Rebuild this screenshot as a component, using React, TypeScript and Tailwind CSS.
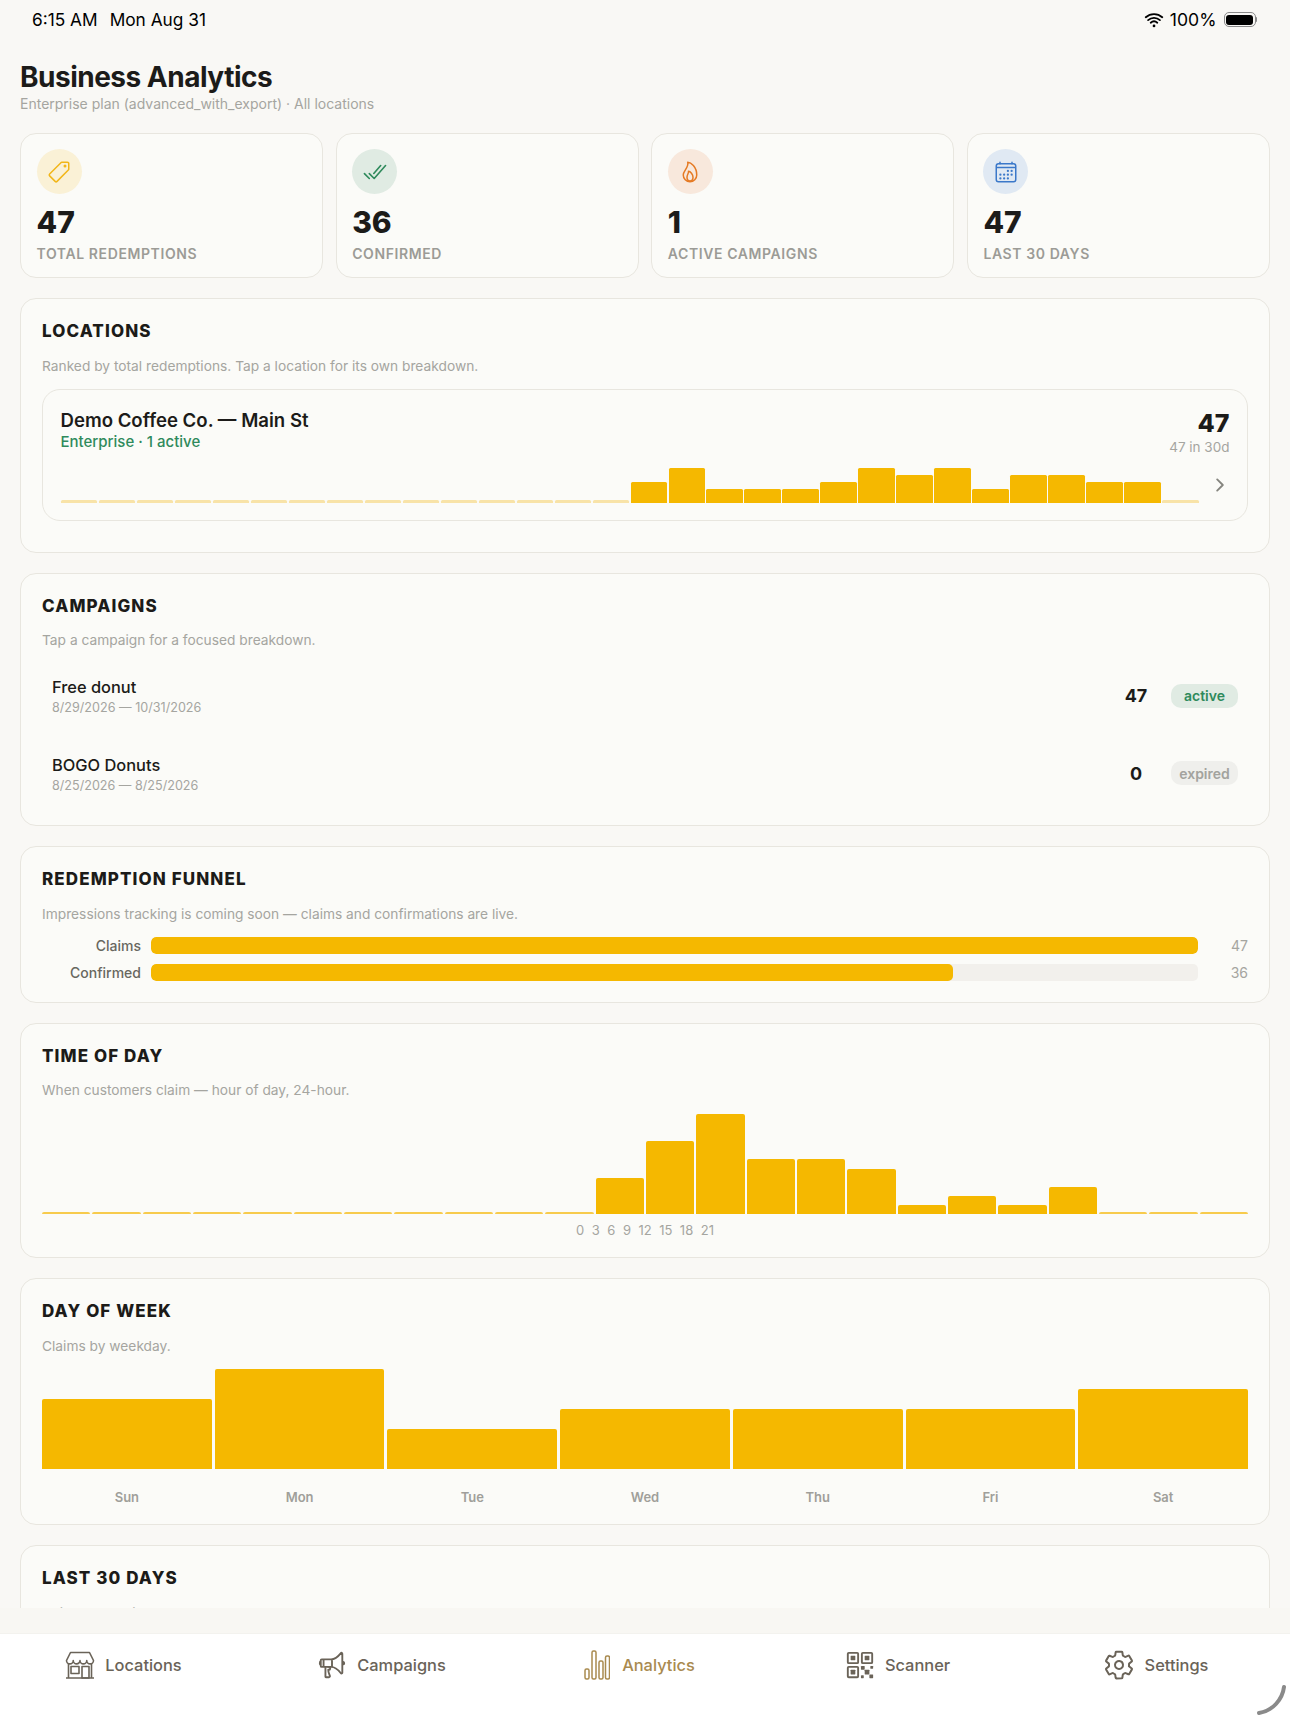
import React from 'react';
import {
  IoCalendarOutline,
  IoCheckmarkDoneOutline,
  IoChevronForward,
  IoFlameOutline,
  IoMegaphoneOutline,
  IoPricetagOutline,
  IoQrCodeOutline,
  IoSettingsOutline,
  IoWifi,
} from 'react-icons/io5';

const sparkline = [0, 0, 0, 0, 0, 0, 0, 0, 0, 0, 0, 0, 0, 0, 0, 3, 5, 2, 2, 2, 3, 5, 4, 5, 2, 4, 4, 3, 3, 0];
const hours = [0, 0, 0, 0, 0, 0, 0, 0, 0, 0, 0, 4, 8, 11, 6, 6, 5, 1, 2, 1, 3, 0, 0, 0];
const weekdays = [
  { day: 'Sun', value: 7 },
  { day: 'Mon', value: 10 },
  { day: 'Tue', value: 4 },
  { day: 'Wed', value: 6 },
  { day: 'Thu', value: 6 },
  { day: 'Fri', value: 6 },
  { day: 'Sat', value: 8 },
];

function StoreIcon() {
  return (
    <svg className="h-[28px] w-[30px]" viewBox="0 0 30 28" fill="none" stroke="currentColor" strokeWidth="1.6" strokeLinejoin="round">
      <path d="M5.5 1.5h19l4 8a3.375 3.375 0 0 1-6.75 0a3.375 3.375 0 0 1-6.75 0a3.375 3.375 0 0 1-6.75 0a3.375 3.375 0 0 1-6.75 0z" />
      <path d="M3.5 13v13.5M26.5 13v13.5M1 27h28" />
      <rect x="6" y="15.5" width="8" height="7" />
      <rect x="17" y="15.5" width="7" height="11.5" />
    </svg>
  );
}

function BarsIcon() {
  return (
    <svg className="mr-[2px] h-[30px] w-[26px]" viewBox="0 0 26 30" fill="none" stroke="currentColor" strokeWidth="1.5">
      <rect x="1" y="19" width="4" height="10" rx="1.5" />
      <rect x="8" y="1" width="4" height="28" rx="1.5" />
      <rect x="15" y="11" width="4" height="18" rx="1.5" />
      <rect x="21.5" y="6" width="4" height="23" rx="1.5" />
    </svg>
  );
}

function StatCard({ icon, tint, value, label }: { icon: React.ReactNode; tint: string; value: string; label: string }) {
  return (
    <div className="h-[145px] rounded-[16px] border border-[#e8e6df] bg-[#fbfbf8] px-[15.5px] pt-[15px]">
      <div className={`flex h-[45px] w-[45px] items-center justify-center rounded-full ${tint}`}>{icon}</div>
      <div className="mt-[10px] h-[36px] text-[30px] leading-[36px] font-extrabold text-[#1c1b19]">{value}</div>
      <div className="mt-[5px] text-[14px] leading-[18px] font-semibold tracking-[0.6px] text-[#9c9b96]">{label}</div>
    </div>
  );
}

function Section({ title, sub, className, children }: { title: string; sub: string; className: string; children: React.ReactNode }) {
  return (
    <section className={`rounded-[16px] border border-[#e8e6df] bg-[#fbfbf8] px-[21px] pt-[22px] ${className}`}>
      <h2 className="text-[17px] leading-[20px] font-extrabold tracking-[1.1px] text-[#1c1b19]">{title}</h2>
      <p className="mt-[15.5px] mb-[0.5px] text-[13.75px] leading-[18px] text-[#a5a5a0]">{sub}</p>
      {children}
    </section>
  );
}

function CampaignRow({ name, dates, count, status, active }: { name: string; dates: string; count: string; status: string; active?: boolean }) {
  return (
    <div className="flex h-[77.5px] items-center px-[10px]">
      <div className="flex-1 pt-[2px]">
        <div className="text-[16.4px] leading-[22px] font-medium text-[#1c1b19]">{name}</div>
        <div className="mt-[1px] text-[12.6px] leading-[18px] text-[#a5a5a0]">{dates}</div>
      </div>
      <div className="w-[24px] text-center text-[18px] font-bold text-[#1c1b19]">{count}</div>
      <div
        className={`ml-[23px] flex h-[24px] w-[67px] items-center justify-center rounded-[10px] text-[14px] font-semibold ${
          active ? 'bg-[#e0ebe3] text-[#2f8a5c]' : 'bg-[#efefec] text-[#a3a39e]'
        }`}
      >
        {status}
      </div>
    </div>
  );
}

function FunnelRow({ label, value, pct }: { label: string; value: string; pct: number }) {
  return (
    <div className="flex h-[17px] items-center">
      <div className="w-[99px] text-right text-[14px] font-medium text-[#68675f]">{label}</div>
      <div className="ml-[10px] h-[17px] flex-1 overflow-hidden rounded-[5px] bg-[#f2f0ec]">
        <div className="h-full rounded-[5px] bg-[#f5b800]" style={{ width: `${pct}%` }} />
      </div>
      <div className="w-[50px] text-right text-[14px] text-[#a5a5a0]">{value}</div>
    </div>
  );
}

function NavItem({ icon, label, active }: { icon: React.ReactNode; label: string; active?: boolean }) {
  return (
    <div className={`flex h-[28px] flex-1 items-center justify-center gap-[10px] ${active ? 'text-[#a98a4f]' : 'text-[#6a6358]'}`}>
      {icon}
      <span className="text-[16.4px] font-medium">{label}</span>
    </div>
  );
}

export default function App() {
  return (
    <div className="relative flex h-[1720px] w-[1290px] flex-col overflow-hidden bg-[#f9f8f5] font-['Inter',sans-serif]">
      <div className="flex h-[40px] shrink-0 items-center justify-between pr-[33px] pl-[32px] text-[17.3px] text-black">
        <div className="flex gap-[12px]">
          <span>6:15 AM</span>
          <span>Mon Aug 31</span>
        </div>
        <div className="flex items-center gap-[5px]">
          <IoWifi className="h-[22px] w-[22px]" />
          <span className="text-[17.6px]">100%</span>
          <div className="ml-[2px] flex items-center">
            <div className="flex h-[15px] w-[32px] items-center rounded-[5px] border border-[#8a8a8a] p-[1.5px]">
              <div className="h-full w-full rounded-[3px] bg-black" />
            </div>
            <div className="h-[5px] w-[1.5px] rounded-r-[1px] bg-[#8a8a8a]" />
          </div>
        </div>
      </div>

      <main className="relative min-h-0 flex-1 overflow-hidden px-[20px]">
        <h1 className="mt-[20px] text-[28px] leading-[34px] font-bold tracking-[-0.5px] text-[#1c1b19]">Business Analytics</h1>
        <p className="mt-[1px] text-[14px] leading-[18px] text-[#a5a5a0]">Enterprise plan (advanced_with_export) · All locations</p>

        <div className="mt-[20px] grid grid-cols-4 gap-[12.5px]">
          <StatCard tint="bg-[#faf1d6]" value="47" label="TOTAL REDEMPTIONS" icon={<IoPricetagOutline className="h-[24px] w-[24px] text-[#f2b619]" />} />
          <StatCard tint="bg-[#e0ebe3]" value="36" label="CONFIRMED" icon={<IoCheckmarkDoneOutline className="h-[26px] w-[26px] text-[#2f8a5c]" />} />
          <StatCard tint="bg-[#f8e8dc]" value="1" label="ACTIVE CAMPAIGNS" icon={<IoFlameOutline className="h-[24px] w-[24px] text-[#e57a24]" />} />
          <StatCard tint="bg-[#e0e9f3]" value="47" label="LAST 30 DAYS" icon={<IoCalendarOutline className="h-[24px] w-[24px] text-[#3b78c9]" />} />
        </div>

        <div className="mt-[20px] flex flex-col gap-[20px]">
          <Section title="LOCATIONS" sub="Ranked by total redemptions. Tap a location for its own breakdown." className="pb-[31px]">
            <div className="mt-[14px] h-[132px] rounded-[18px] border border-[#e8e6df] bg-[#fbfbf8] pt-[18px] pr-[17.5px] pl-[17.5px]">
              <div className="flex justify-between">
                <div>
                  <div className="text-[18.6px] leading-[24px] font-semibold text-[#1c1b19]">Demo Coffee Co. — Main St</div>
                  <div className="mt-[1px] text-[15px] leading-[18px] font-medium text-[#2f8a5c]">Enterprise · 1 active</div>
                </div>
                <div className="text-right">
                  <div className="text-[25px] leading-[30px] font-extrabold text-[#1c1b19]">47</div>
                  <div className="mt-[1px] text-[13.5px] leading-[16px] text-[#a5a5a0]">47 in 30d</div>
                </div>
              </div>
              <div className="mt-[13px] flex items-center gap-[11px] pl-[0.5px]">
                <div className="flex h-[35px] flex-1 items-end gap-[1.5px]">
                  {sparkline.map((v, i) => (
                    <div
                      key={i}
                      className={`flex-1 rounded-t-[1.5px] ${v ? 'bg-[#f5b800]' : 'bg-[#f8e3a8]'}`}
                      style={{ height: v ? v * 7 : 3 }}
                    />
                  ))}
                </div>
                <IoChevronForward className="h-[20px] w-[20px] text-[#85857f]" />
              </div>
            </div>
          </Section>

          <Section title="CAMPAIGNS" sub="Tap a campaign for a focused breakdown." className="pb-[13px]">
            <div className="mt-[8px]">
              <CampaignRow name="Free donut" dates="8/29/2026 — 10/31/2026" count="47" status="active" active />
              <CampaignRow name="BOGO Donuts" dates="8/25/2026 — 8/25/2026" count="0" status="expired" />
            </div>
          </Section>

          <Section title="REDEMPTION FUNNEL" sub="Impressions tracking is coming soon — claims and confirmations are live." className="pb-[21px]">
            <div className="mt-[14px] flex flex-col gap-[10px]">
              <FunnelRow label="Claims" value="47" pct={100} />
              <FunnelRow label="Confirmed" value="36" pct={76.6} />
            </div>
          </Section>

          <Section title="TIME OF DAY" sub="When customers claim — hour of day, 24-hour." className="pb-[19px]">
            <div className="mt-[15px] flex h-[100px] items-end gap-[2px]">
              {hours.map((v, i) => (
                <div
                  key={i}
                  className={`flex-1 rounded-t-[2px] ${v ? 'bg-[#f5b800]' : 'bg-[#f7cb4d]'}`}
                  style={{ height: v ? (v / 11) * 100 : 2 }}
                />
              ))}
            </div>
            <div className="mt-[8px] flex h-[16px] items-center justify-center gap-[7.5px] text-[13px] leading-[16px] text-[#a5a5a0]">
              {['0', '3', '6', '9', '12', '15', '18', '21'].map((h) => (
                <span key={h}>{h}</span>
              ))}
            </div>
          </Section>

          <Section title="DAY OF WEEK" sub="Claims by weekday." className="pb-[19.5px]">
            <div className="mt-[14px] flex h-[100px] items-end gap-[3px]">
              {weekdays.map((d) => (
                <div key={d.day} className="flex-1 rounded-t-[2px] bg-[#f5b800]" style={{ height: d.value * 10 }} />
              ))}
            </div>
            <div className="mt-[20px] flex gap-[3px]">
              {weekdays.map((d) => (
                <div key={d.day} className="flex-1 text-center text-[13px] leading-[16px] font-semibold text-[#a09f9a]">
                  {d.day}
                </div>
              ))}
            </div>
          </Section>

          <Section title="LAST 30 DAYS" sub="Daily redemption count." className="pb-[100px]">
            <div />
          </Section>
        </div>

        <div className="absolute right-0 bottom-0 left-0 h-[25px] bg-[#f8f7f3]" />
      </main>

      <nav className="h-[87px] shrink-0 border-t border-[#f3f2ee] bg-white pt-[17px]">
        <div className="-ml-[5.5px] flex w-[1290px] items-start">
          <NavItem label="Locations" icon={<StoreIcon />} />
          <NavItem label="Campaigns" icon={<IoMegaphoneOutline className="h-[30px] w-[30px]" />} />
          <NavItem label="Analytics" active icon={<BarsIcon />} />
          <NavItem label="Scanner" icon={<IoQrCodeOutline className="h-[30px] w-[30px]" />} />
          <NavItem label="Settings" icon={<IoSettingsOutline className="h-[32px] w-[32px]" />} />
        </div>
      </nav>

      <svg className="absolute right-[4px] bottom-[5px] h-[30px] w-[30px]" viewBox="0 0 30 30" fill="none">
        <path d="M28 2C26.5 14 17 26 3 28" stroke="#8a8a8a" strokeWidth="4" strokeLinecap="round" />
      </svg>
    </div>
  );
}
